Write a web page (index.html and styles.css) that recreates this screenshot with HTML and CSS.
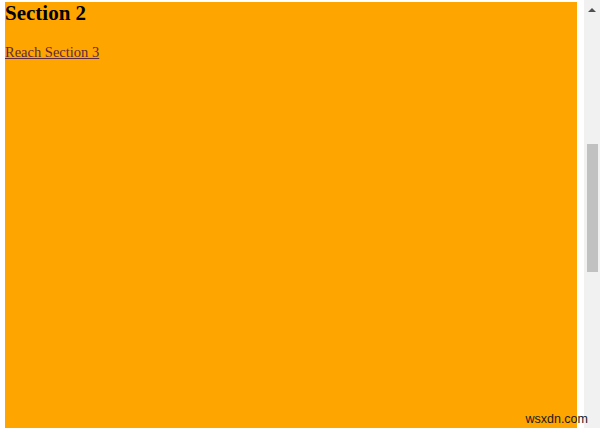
FILE: index.html
```html
<!DOCTYPE html>
<html>
<head>
<meta charset="utf-8">
<link rel="stylesheet" href="styles.css">
</head>
<body>
<div class="page">
  <div class="section">
    <h2 class="title">Section 2</h2>
    <p class="para"><a class="link" href="#section3">Reach Section 3</a></p>
  </div>
  <div class="scrollbar">
    <div class="arrow"></div>
    <div class="thumb"></div>
  </div>
  <div class="watermark">wsxdn.com</div>
</div>
</body>
</html>
```

FILE: styles.css
```css
html, body {
  margin: 0;
  padding: 0;
  background: #ffffff;
}
.page {
  position: relative;
  display: flex;
  width: 600px;
  height: 428px;
  padding: 2px 0 0 5px;
  box-sizing: border-box;
  overflow: hidden;
}
.section {
  width: 572px;
  background: #ffa500;
  font-family: "Liberation Serif", "Times New Roman", serif;
  color: #000;
}
.title {
  margin: 0;
  font-size: 21px;
  font-weight: bold;
  line-height: 22px;
}
.para {
  margin: 20px 0 0 0;
  font-size: 14.5px;
  line-height: 17px;
}
.link {
  color: #5e2a3c;
  text-decoration: underline;
}
.scrollbar {
  margin-left: auto;
  margin-top: -2px;
  width: 16px;
  height: 428px;
  background: #f1f1f1;
  display: flex;
  flex-direction: column;
  align-items: center;
}
.arrow {
  margin-top: 8px;
  width: 0;
  height: 0;
  border-left: 4px solid transparent;
  border-right: 4px solid transparent;
  border-bottom: 4px solid #505050;
}
.thumb {
  margin-top: 132px;
  width: 11px;
  height: 128px;
  background: #c1c1c1;
}
.watermark {
  position: absolute;
  right: 12px;
  bottom: 2px;
  font-family: "Liberation Sans", Arial, sans-serif;
  font-size: 12.5px;
  color: #1a1a1a;
}
```
